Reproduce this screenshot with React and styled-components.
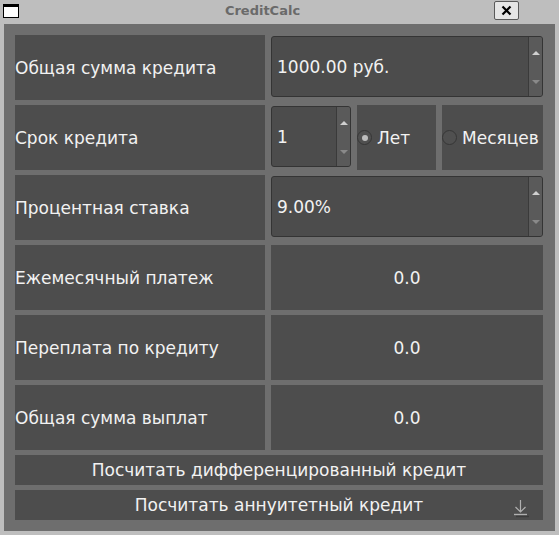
import React from 'react';
import styled, { createGlobalStyle } from 'styled-components';

const GlobalStyle = createGlobalStyle`
  html, body {
    margin: 0;
    padding: 0;
    background: #bebebe;
  }
  body {
    font-family: "DejaVu Sans", "Liberation Sans", sans-serif;
  }
`;

const Window = styled.div`
  width: 559px;
  height: 535px;
  background: #bebebe;
  display: flex;
  flex-direction: column;
  box-sizing: border-box;
  padding: 0 4px 4px 4px;
`;

const TitleBar = styled.div`
  height: 24px;
  display: flex;
  align-items: center;
`;

const WinIcon = styled.div`
  width: 14px;
  height: 10px;
  border: 1px solid #000;
  border-top: 3px solid #000;
  background: #fff;
  margin-left: -1px;
  margin-top: -3px;
`;

const Title = styled.div`
  flex-grow: 1;
  text-align: center;
  font-weight: bold;
  font-size: 13px;
  color: #6a6a6a;
  padding-left: 12px;
  margin-top: -3px;
`;

const CloseButton = styled.div`
  width: 23px;
  height: 17px;
  border: 1px solid #5a5a5a;
  border-radius: 2px;
  background: #e6e6e6;
  display: flex;
  align-items: center;
  justify-content: center;
  margin-right: 36px;
  margin-top: -4px;
`;

const Panel = styled.div`
  flex-grow: 1;
  background: #6e6e6e;
  padding: 11px 12px 11px 11px;
  display: flex;
  flex-direction: column;
  gap: 5px;
`;

const Row = styled.div`
  display: grid;
  grid-template-columns: 250px 1fr;
  column-gap: 6px;
  height: 65px;
`;

const Cell = styled.div`
  background: #4d4d4d;
  color: #f2f2f2;
  font-size: 17px;
  display: flex;
  align-items: center;
  justify-content: ${p => (p.$center ? 'center' : 'flex-start')};
`;

const SplitCell = styled.div`
  display: grid;
  grid-template-columns: 80px 79px 1fr;
  column-gap: 6px;
`;

const SpinWrap = styled.div`
  padding-top: 1px;
  padding-bottom: 3px;
  display: flex;
`;

const SpinBox = styled.div`
  flex-grow: 1;
  display: flex;
  border: 1px solid #343434;
  border-radius: 3px;
  background: #4c4c4c;
  overflow: hidden;
`;

const SpinText = styled.div`
  flex-grow: 1;
  display: flex;
  align-items: center;
  padding-left: 5px;
  color: #f2f2f2;
  font-size: 17px;
`;

const SpinButtons = styled.div`
  width: 13px;
  border-left: 1px solid #3a3a3a;
  background: #5a5a5a;
  display: flex;
  flex-direction: column;
  align-items: center;
  justify-content: space-between;
  padding: 14px 0 12px;
`;

const Arrow = styled.div`
  width: 0;
  height: 0;
  border-left: 4px solid transparent;
  border-right: 4px solid transparent;
  ${p => (p.$up
    ? 'border-bottom: 4px solid #d0d0d0;'
    : 'border-top: 4px solid #8a8a8a;')}
`;

const RadioCell = styled(Cell)`
  gap: 5px;
`;

const Radio = styled.div`
  width: 13px;
  height: 13px;
  border-radius: 50%;
  border: 1px solid #363636;
  background: #505050;
  display: flex;
  align-items: center;
  justify-content: center;
  &::after {
    content: '';
    display: ${p => (p.$checked ? 'block' : 'none')};
    width: 6px;
    height: 6px;
    border-radius: 50%;
    background: #bdbdbd;
  }
`;

const Button = styled.div`
  height: 30px;
  background: #4d4d4d;
  color: #f2f2f2;
  font-size: 17px;
  display: flex;
  align-items: center;
  justify-content: center;
  position: relative;
`;

const Grip = styled.svg`
  position: absolute;
  right: 13px;
  bottom: 1px;
`;

function Spin({ value }) {
  return (
    <SpinWrap>
      <SpinBox>
        <SpinText>{value}</SpinText>
        <SpinButtons>
          <Arrow $up />
          <Arrow />
        </SpinButtons>
      </SpinBox>
    </SpinWrap>
  );
}

const results = [
  'Ежемесячный платеж',
  'Переплата по кредиту',
  'Общая сумма выплат',
];

export default function App() {
  return (
    <>
      <GlobalStyle />
      <Window>
        <TitleBar>
          <WinIcon />
          <Title>CreditCalc</Title>
          <CloseButton>
            <svg width="11" height="11" viewBox="0 0 11 11">
              <path d="M1.5 1.5 L9.5 9.5 M9.5 1.5 L1.5 9.5" stroke="#000" strokeWidth="2.2" />
            </svg>
          </CloseButton>
        </TitleBar>
        <Panel>
          <Row>
            <Cell>Общая сумма кредита</Cell>
            <Spin value="1000.00 руб." />
          </Row>
          <Row>
            <Cell>Срок кредита</Cell>
            <SplitCell>
              <Spin value="1" />
              <RadioCell>
                <Radio $checked />
                Лет
              </RadioCell>
              <RadioCell>
                <Radio />
                Месяцев
              </RadioCell>
            </SplitCell>
          </Row>
          <Row>
            <Cell>Процентная ставка</Cell>
            <Spin value="9.00%" />
          </Row>
          {results.map(label => (
            <Row key={label}>
              <Cell>{label}</Cell>
              <Cell $center>0.0</Cell>
            </Row>
          ))}
          <Button>Посчитать дифференцированный кредит</Button>
          <Button>
            Посчитать аннуитетный кредит
            <Grip width="18" height="22" viewBox="0 0 18 22">
              <path d="M8.5 3 V15 M3.5 10 L8.5 15 L13.5 10" stroke="#b0b0b0" strokeWidth="1.2" fill="none" />
              <path d="M2 17.5 H15" stroke="#b0b0b0" strokeWidth="1.4" />
              <path d="M4 19.5 H17" stroke="#3c3c3c" strokeWidth="1.4" />
            </Grip>
          </Button>
        </Panel>
      </Window>
    </>
  );
}
